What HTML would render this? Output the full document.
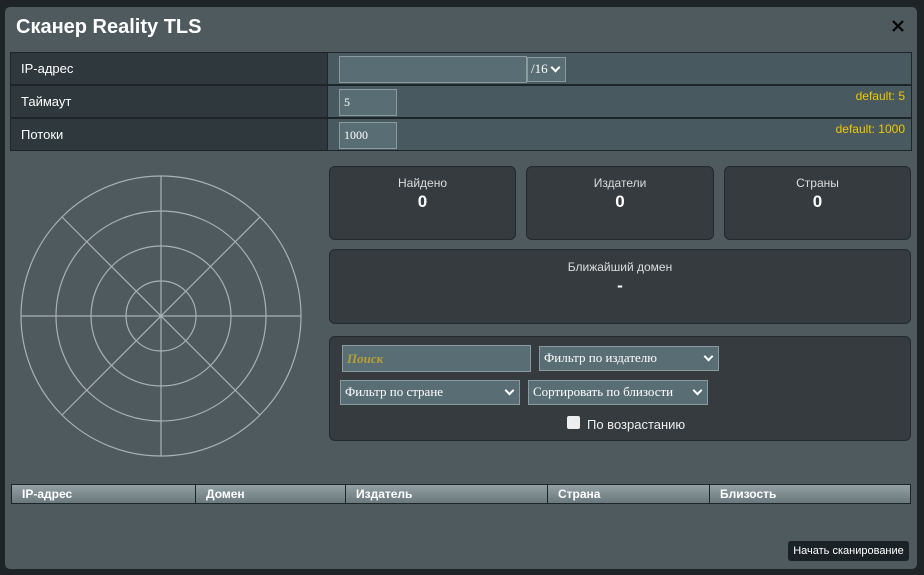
<!DOCTYPE html>
<html><head><meta charset="utf-8"><style>
*{box-sizing:border-box;margin:0;padding:0}
body{width:924px;height:575px;overflow:hidden;background:#1f2426;font-family:"Liberation Sans",sans-serif;position:relative;color:#fff}
.a{position:absolute}
.modal{left:5px;top:7px;width:912px;height:562px;background:#4e5a5e;border-radius:5px}
.cell{height:33px;border:1px solid #1e2528;font-size:13px;line-height:31px}
.lab{background:#2e383d;padding-left:10px}
.val{background:#485a5f}
.inp{background:#596e74;border:1px solid #8b9a9e;font-family:"Liberation Serif",serif;font-size:12px;color:#fff;padding-left:4px}
.def{color:#f0c800;font-size:12px;right:6px;top:3px;line-height:14px}
.box{background:#353b3f;border:1px solid #222a2d;border-radius:6px;text-align:center;color:#ddd;font-size:12px}
.box b{display:block;color:#fff;font-size:17px;margin-top:2px}
.sel{background:#596e74;border:1px solid #8b9a9e;font-family:"Liberation Serif",serif;font-size:13px;color:#fff;padding-left:4px;line-height:22px}
.sel:after{content:"";position:absolute;right:6px;top:6px;width:5px;height:5px;border-right:2px solid #fff;border-bottom:2px solid #fff;transform:rotate(45deg)}
.th{top:484px;height:20px;border:1px solid #1e2528;background:linear-gradient(#929fa4,#6a797e);font-weight:bold;font-size:12px;line-height:18px;padding-left:10px}
</style></head><body>
<div class="a modal"></div>
<div class="a" style="left:16px;top:16px;font-size:20px;font-weight:bold">Сканер Reality TLS</div>
<svg class="a" style="left:892px;top:20px" width="12" height="12"><path d="M1 1L11 11M11 1L1 11" stroke="#000" stroke-width="2.2"/></svg>

<div class="a cell lab" style="left:10px;top:52px;width:318px">IP-адрес</div>
<div class="a cell val" style="left:327px;top:52px;width:585px"></div>
<div class="a cell lab" style="left:10px;top:85px;width:318px">Таймаут</div>
<div class="a cell val" style="left:327px;top:85px;width:585px"><span class="a def">default: 5</span></div>
<div class="a cell lab" style="left:10px;top:118px;width:318px">Потоки</div>
<div class="a cell val" style="left:327px;top:118px;width:585px"><span class="a def">default: 1000</span></div>
<div class="a inp" style="left:339px;top:56px;width:188px;height:27px"></div>
<div class="a sel" style="left:527px;top:57px;width:39px;height:25px;font-size:13px;padding-left:3px">/16</div>
<div class="a inp" style="left:339px;top:89px;width:58px;height:27px;line-height:25px">5</div>
<div class="a inp" style="left:339px;top:122px;width:58px;height:27px;line-height:25px">1000</div>

<svg class="a" style="left:0;top:170px" width="330" height="300">
<g fill="none" stroke="#a9b1b3" stroke-width="1.2">
<circle cx="161" cy="146" r="140"/><circle cx="161" cy="146" r="105"/><circle cx="161" cy="146" r="70"/><circle cx="161" cy="146" r="35"/>
<line x1="21" y1="146" x2="301" y2="146"/><line x1="161" y1="6" x2="161" y2="286"/>
<line x1="62" y1="47" x2="260" y2="245"/><line x1="260" y1="47" x2="62" y2="245"/>
</g></svg>

<div class="a box" style="left:329px;top:166px;width:187px;height:74px;padding-top:9px">Найдено<b>0</b></div>
<div class="a box" style="left:526px;top:166px;width:188px;height:74px;padding-top:9px">Издатели<b>0</b></div>
<div class="a box" style="left:724px;top:166px;width:187px;height:74px;padding-top:9px">Страны<b>0</b></div>
<div class="a box" style="left:329px;top:249px;width:582px;height:75px;padding-top:10px">Ближайший домен<b>-</b></div>
<div class="a box" style="left:329px;top:336px;width:582px;height:105px"></div>

<div class="a inp" style="left:342px;top:345px;width:189px;height:27px;line-height:25px;color:#b8a030;font-style:italic;font-weight:bold;font-size:13px">Поиск</div>
<div class="a sel" style="left:539px;top:346px;width:180px;height:25px">Фильтр по издателю</div>
<div class="a sel" style="left:340px;top:380px;width:180px;height:25px">Фильтр по стране</div>
<div class="a sel" style="left:528px;top:380px;width:180px;height:25px">Сортировать по близости</div>
<div class="a" style="left:567px;top:416px;width:13px;height:13px;background:#eee;border-radius:2px"></div>
<div class="a" style="left:587px;top:417px;font-size:13px;color:#eee">По возрастанию</div>

<div class="a th" style="left:11px;width:185px">IP-адрес</div>
<div class="a th" style="left:195px;width:151px">Домен</div>
<div class="a th" style="left:345px;width:203px">Издатель</div>
<div class="a th" style="left:547px;width:163px">Страна</div>
<div class="a th" style="left:709px;width:202px">Близость</div>

<div class="a" style="left:788px;top:541px;width:121px;height:20px;background:#1b2225;border-radius:3px;font-size:11px;line-height:20px;text-align:center">Начать сканирование</div>
</body></html>
